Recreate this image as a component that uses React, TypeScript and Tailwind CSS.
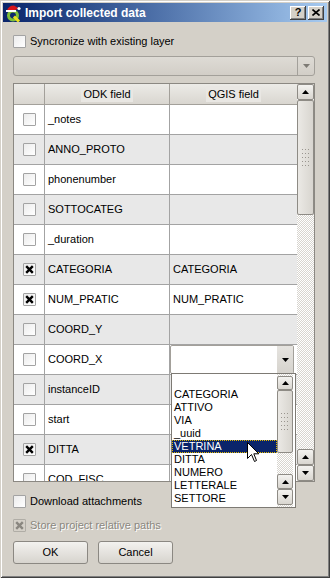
import React from 'react';

type Row = { name: string; checked?: boolean; qgis?: string; combo?: boolean };

const rows: Row[] = [
  { name: '_notes' },
  { name: 'ANNO_PROTO' },
  { name: 'phonenumber' },
  { name: 'SOTTOCATEG' },
  { name: '_duration' },
  { name: 'CATEGORIA', checked: true, qgis: 'CATEGORIA' },
  { name: 'NUM_PRATIC', checked: true, qgis: 'NUM_PRATIC' },
  { name: 'COORD_Y' },
  { name: 'COORD_X', combo: true },
  { name: 'instanceID' },
  { name: 'start' },
  { name: 'DITTA', checked: true },
  { name: 'COD_FISC' },
];

const options = ['CATEGORIA', 'ATTIVO', 'VIA', '_uuid', 'VETRINA', 'DITTA', 'NUMERO', 'LETTERALE', 'SETTORE'];

function Check({ checked, disabled }: { checked?: boolean; disabled?: boolean }) {
  return (
    <span
      className={`flex h-[13px] w-[13px] shrink-0 items-center justify-center rounded-[1px] border ${
        disabled ? 'border-[#b0ada6] bg-[#d4d0c8]' : 'border-[#a3a3a3] bg-gradient-to-br from-[#ececec] to-white'
      }`}
    >
      {checked && (
        <svg width="9" height="9" viewBox="0 0 9 9">
          <path d="M1.2 1.2L7.8 7.8M7.8 1.2L1.2 7.8" stroke={disabled ? '#8a8780' : '#000'} strokeWidth="2.4" />
        </svg>
      )}
    </span>
  );
}

function Tri({ up, color = '#000' }: { up?: boolean; color?: string }) {
  return (
    <svg width="7" height="4" viewBox="0 0 7 4">
      <path d={up ? 'M0 4L3.5 0L7 4Z' : 'M0 0L7 0L3.5 4Z'} fill={color} />
    </svg>
  );
}

function ScrollBtn({ up, h }: { up?: boolean; h: string }) {
  return (
    <div className={`${h} flex w-full items-center justify-center rounded-[2px] border border-[#8e8b85] bg-gradient-to-b from-[#f4f3f0] to-[#d9d6d0]`}>
      <Tri up={up} />
    </div>
  );
}

function Grip() {
  const dots = [];
  for (let r = 0; r < 5; r++) {
    for (let c = 0; c < 3; c++) {
      dots.push(<rect key={`${r}-${c}`} x={c * 3} y={r * 4} width="1" height="1" fill="#9a968f" />);
    }
  }
  return (
    <svg width="8" height="18" viewBox="0 0 8 18">
      {dots}
    </svg>
  );
}

function Thumb({ h }: { h: string }) {
  return (
    <div className={`${h} flex w-full items-center justify-center rounded-[2px] border border-[#8e8b85] bg-gradient-to-r from-[#ebe9e5] to-[#d8d5cf]`}>
      <Grip />
    </div>
  );
}

const track =
  'bg-[image:repeating-conic-gradient(#ffffff_0%_25%,#d8d5cf_0%_50%)] bg-[length:2px_2px]';

function QgisIcon() {
  return (
    <svg width="17" height="18" viewBox="0 0 17 18">
      <circle cx="8" cy="11.5" r="4.5" fill="none" stroke="#7fbf3a" strokeWidth="3" />
      <path d="M9 12.5L14 17.5" stroke="#e8e020" strokeWidth="3" />
      <path d="M2 7Q3 1.5 9 1.5L14 4.5L10 6Z" fill="#d8141a" />
      <rect x="1" y="6" width="10" height="2" fill="#ffffff" />
      <circle cx="14" cy="4.5" r="1.6" fill="#ffffff" />
    </svg>
  );
}

export default function App() {
  return (
    <div className="relative flex h-[578px] w-[330px] flex-col bg-[#d4d0c8] p-[3px] font-['Liberation_Sans',Tahoma,sans-serif] text-[11px] text-black shadow-[inset_1px_1px_0_#d4d0c8,inset_-1px_-1px_0_#404040,inset_2px_2px_0_#ffffff,inset_-2px_-2px_0_#808080]">
      {/* title bar */}
      <div className="flex h-[19px] items-center bg-gradient-to-r from-[#0a246a] to-[#a6caf0] pl-[2px] pr-[3px]">
        <QgisIcon />
        <span className="ml-[3px] text-[12px] font-bold text-white">Import collected data</span>
        <div className="ml-auto flex gap-[2px]">
          <div className="flex h-[14px] w-[16px] items-center justify-center bg-[#d4d0c8] text-[11px] font-bold leading-none shadow-[inset_-1px_-1px_0_#404040,inset_1px_1px_0_#ffffff,inset_-2px_-2px_0_#808080]">
            ?
          </div>
          <div className="flex h-[14px] w-[16px] items-center justify-center bg-[#d4d0c8] shadow-[inset_-1px_-1px_0_#404040,inset_1px_1px_0_#ffffff,inset_-2px_-2px_0_#808080]">
            <svg width="8" height="7" viewBox="0 0 8 7">
              <path d="M0.5 0.5L7.5 6.5M7.5 0.5L0.5 6.5" stroke="#000" strokeWidth="1.6" />
            </svg>
          </div>
        </div>
      </div>

      <div className="flex flex-col pl-[10px]">
        <div className="mt-[13px] flex h-[13px] items-center gap-[4px]">
          <Check />
          <span className="text-[11px]">Syncronize with existing layer</span>
        </div>

        <div className="mt-[8px] flex h-[20px] w-[302px] rounded-[3px] border border-[#a3a09a] bg-gradient-to-b from-[#dedbd5] to-[#d2cec7]">
          <div className="flex-1" />
          <div className="flex w-[17px] items-center justify-center border-l border-[#a3a09a]">
            <Tri color="#7d7a74" />
          </div>
        </div>

        {/* table */}
        <div className="mt-[7px] flex h-[399px] w-[302px] border border-[#8b8882] bg-white">
          <div className="flex flex-1 flex-col overflow-hidden">
            <div className="flex h-[21px] shrink-0 border-b border-[#a3a09a] bg-gradient-to-b from-[#ecebe7] to-[#d9d6d0]">
              <div className="w-[31px] border-r border-[#a3a09a]" />
              <div className="flex w-[125px] items-center justify-center border-r border-[#a3a09a]">
                <span className="bg-[#e9e7e3] px-[2px]">ODK field</span>
              </div>
              <div className="flex flex-1 items-center justify-center">
                <span className="bg-[#e9e7e3] px-[2px]">QGIS field</span>
              </div>
            </div>
            {rows.map((r, i) => (
              <div
                key={r.name}
                className={`flex h-[30px] shrink-0 border-b border-[#a3a3a3] ${i % 2 === 1 ? 'bg-[#e8e8e8]' : 'bg-white'}`}
              >
                <div className="flex w-[31px] items-center justify-center border-r border-[#a3a3a3]">
                  <Check checked={r.checked} />
                </div>
                <div className="flex w-[125px] items-center border-r border-[#a3a3a3] pl-[3px]">{r.name}</div>
                <div className="flex flex-1 items-center pl-[3px]">
                  {r.combo ? (
                    <div className="-ml-[3px] flex h-[29px] w-full rounded-[2px] border border-[#a3a09a] bg-white">
                      <div className="flex-1" />
                      <div className="flex w-[16px] items-center justify-center bg-gradient-to-b from-[#e6e4e0] to-[#d6d3cd]">
                        <Tri />
                      </div>
                    </div>
                  ) : (
                    r.qgis
                  )}
                </div>
              </div>
            ))}
          </div>
          <div className={`flex w-[17px] flex-col ${track}`}>
            <ScrollBtn up h="h-[16px]" />
            <Thumb h="h-[115px]" />
            <div className="h-[234px]" />
            <ScrollBtn up h="h-[16px]" />
            <ScrollBtn h="h-[16px]" />
          </div>
        </div>

        <div className="mt-[13px] flex h-[13px] items-center gap-[4px]">
          <Check />
          <span>Download attachments</span>
        </div>
        <div className="mt-[11px] flex h-[13px] items-center gap-[4px]">
          <Check checked disabled />
          <span className="text-[#8a8780] [text-shadow:1px_1px_0_#ffffff]">Store project relative paths</span>
        </div>

        <div className="mt-[9px] flex gap-[10px]">
          <button className="flex h-[23px] w-[75px] items-center justify-center rounded-[3px] border border-[#8b8882] bg-gradient-to-b from-[#f3f2ef] to-[#d7d4ce]">
            OK
          </button>
          <button className="flex h-[23px] w-[75px] items-center justify-center rounded-[3px] border border-[#8b8882] bg-gradient-to-b from-[#f3f2ef] to-[#d7d4ce]">
            Cancel
          </button>
        </div>
      </div>

      {/* open combo popup */}
      <div className="absolute left-[171px] top-[373px] flex h-[135px] w-[125px] border border-[#7d7a74] bg-white">
        <div className="flex flex-1 flex-col pt-[14px]">
          {options.map((o) => (
            <div
              key={o}
              className={`h-[13px] pl-[2px] leading-[13px] ${
                o === 'VETRINA' ? 'bg-[#0a246a] text-white outline outline-1 outline-dotted outline-[#e0b800] -outline-offset-1' : ''
              }`}
            >
              {o}
            </div>
          ))}
        </div>
        <div className={`mr-[2px] flex w-[16px] flex-col py-[2px] ${track}`}>
          <ScrollBtn up h="h-[14px]" />
          <Thumb h="h-[63px]" />
          <div className="h-[21px]" />
          <ScrollBtn up h="h-[15px]" />
          <ScrollBtn h="h-[16px]" />
        </div>
      </div>

      {/* mouse cursor */}
      <svg className="absolute left-[247px] top-[442px]" width="13" height="21" viewBox="0 0 13 21">
        <path d="M0.5 0.5L0.5 16.5L4.5 12.5L7.5 19.5L9.5 18.5L6.8 11.8L11.8 11.8Z" fill="#fff" stroke="#000" strokeWidth="1" />
      </svg>
    </div>
  );
}
